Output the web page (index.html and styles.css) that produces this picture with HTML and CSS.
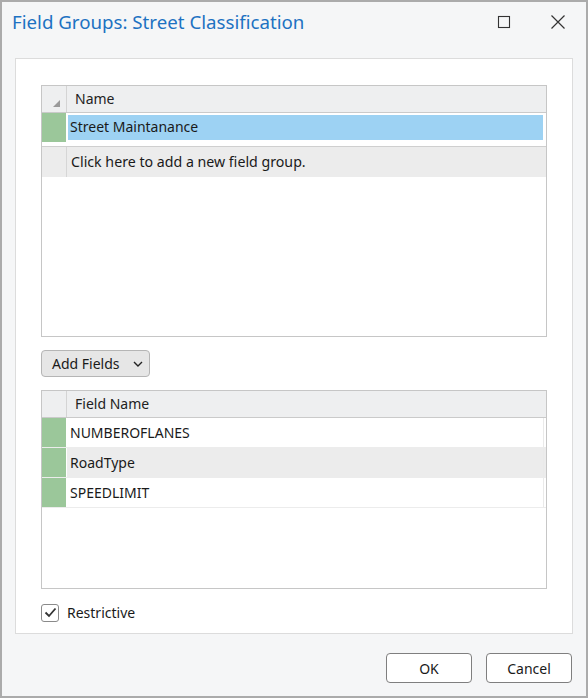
FILE: index.html
```html
<!DOCTYPE html>
<html lang="en">
<head>
  <meta charset="UTF-8">
  <title>Field Groups: Street Classification</title>
  <link rel="stylesheet" href="styles.css">
</head>
<body>
  <div class="window">
    <div class="titlebar">
      <div class="title">Field Groups: Street Classification</div>
      <div class="win-buttons">
        <svg class="win-icon" width="14" height="14" viewBox="0 0 14 14">
          <rect x="1.5" y="1.5" width="11" height="11" fill="none" stroke="#333" stroke-width="1.1"/>
        </svg>
        <svg class="win-icon close" width="16" height="16" viewBox="0 0 16 16">
          <path d="M1.5 1.5 L14.5 14.5 M14.5 1.5 L1.5 14.5" stroke="#333" stroke-width="1.2" fill="none"/>
        </svg>
      </div>
    </div>

    <div class="panel">
      <div class="grid groups">
        <div class="grid-header">
          <div class="corner">
            <svg width="7" height="7" viewBox="0 0 7 7"><path d="M7 0 L7 7 L0 7 Z" fill="#9a9a9a"/></svg>
          </div>
          <div class="head-cell">Name</div>
        </div>
        <div class="row selected">
          <div class="row-head green"></div>
          <div class="cell"><span class="sel">Street Maintanance</span></div>
        </div>
        <div class="row new-row">
          <div class="row-head"></div>
          <div class="cell">Click here to add a new field group.</div>
        </div>
      </div>

      <button class="dropdown">Add Fields
        <svg width="10" height="6" viewBox="0 0 10 6"><path d="M1 1 L5 5 L9 1" stroke="#222" stroke-width="1.4" fill="none"/></svg>
      </button>

      <div class="grid fields">
        <div class="grid-header">
          <div class="corner"></div>
          <div class="head-cell">Field Name</div>
        </div>
        <div class="row">
          <div class="row-head green"></div>
          <div class="cell">NUMBEROFLANES</div>
        </div>
        <div class="row alt">
          <div class="row-head green"></div>
          <div class="cell">RoadType</div>
        </div>
        <div class="row">
          <div class="row-head green"></div>
          <div class="cell">SPEEDLIMIT</div>
        </div>
      </div>

      <label class="check">
        <span class="box">
          <svg width="13" height="11" viewBox="0 0 13 11"><path d="M1.5 5.5 L5 9 L11.5 1.5" stroke="#333" stroke-width="1.8" fill="none"/></svg>
        </span>
        Restrictive
      </label>
    </div>

    <div class="footer">
      <button class="btn">OK</button>
      <button class="btn">Cancel</button>
    </div>
  </div>
</body>
</html>
```

FILE: styles.css
```css
* {
    margin: 0;
    padding: 0;
    box-sizing: border-box;
}

body {
    font-family: "Noto Sans", "Open Sans", sans-serif;
    font-size: 14px;
    color: #1a1a1a;
    background: #f5f6f7;
}

.window {
    width: 588px;
    height: 698px;
    border: 2px solid #ababab;
    background: #f5f6f7;
    display: flex;
    flex-direction: column;
}

.titlebar {
    height: 56px;
    display: flex;
    justify-content: space-between;
    padding: 7px 0 0 10px;
}

.title {
    color: #1d72c2;
    font-size: 18.7px;
    line-height: 26px;
}

.win-buttons {
    display: flex;
    gap: 39px;
    padding: 6px 20px 0 0;
}

.win-icon {
    display: block;
}

.close {
    margin-top: -1px;
}

.panel {
    margin: 0 13px;
    height: 576px;
    background: #fff;
    border: 1px solid #dcdcdc;
    padding: 26px 25px 0 25px;
}

.grid {
    width: 506px;
    border: 1px solid #c6c6c6;
    background: #fff;
}

.groups {
    height: 252px;
}

.fields {
    height: 199px;
}

.grid-header {
    display: flex;
    height: 27px;
    background: #eeeff0;
    border-bottom: 1px solid #cacaca;
}

.corner {
    width: 25px;
    border-right: 1px solid #d4d4d4;
    display: flex;
    justify-content: flex-end;
    align-items: flex-end;
    padding: 0 6px 5px 0;
}

.head-cell {
    padding-left: 8px;
    line-height: 26px;
    color: #222;
}

.row {
    display: flex;
    height: 30px;
    border-bottom: 1px solid #ececec;
    padding-right: 2px;
}

.row-head {
    width: 25px;
    border-right: 1px solid #e0e0e0;
    flex-shrink: 0;
}

.green {
    background: #9bc79a;
    border-right: 1px solid #fff;
}

.cell {
    flex: 1;
    line-height: 29px;
    padding-left: 3px;
    border-right: 1px solid #eaeaea;
}

.selected {
    height: 33px;
    border-bottom: 4px solid #fff;
}

.selected .cell {
    padding: 2px 1px 0 1px;
    border-right: none;
}

.sel {
    display: block;
    background: #9dd2f3;
    height: 25px;
    line-height: 24px;
    padding-left: 2px;
}

.new-row {
    height: 31px;
    background: #ececec;
    border-top: 1px solid #cfcfcf;
    border-bottom: none;
}

.new-row .row-head {
    border-right: 1px solid #d6d6d6;
}

.new-row .cell {
    padding-left: 4px;
    border-right: none;
    font-size: 14.2px;
}

.alt {
    background: #ececec;
}

.dropdown {
    margin: 13px 0 13px 0;
    height: 27px;
    width: 109px;
    display: flex;
    align-items: center;
    gap: 13px;
    padding-left: 10px;
    font-family: inherit;
    font-size: 14px;
    color: #1a1a1a;
    background: #e6e6e6;
    border: 1px solid #b5b5b5;
    border-radius: 4px;
}

.check {
    display: flex;
    align-items: center;
    gap: 8px;
    margin-top: 14px;
    font-size: 14px;
}

.box {
    width: 18px;
    height: 18px;
    border: 1px solid #8a8a8a;
    border-radius: 3px;
    display: flex;
    align-items: center;
    justify-content: center;
}

.footer {
    flex: 1;
    display: flex;
    justify-content: flex-end;
    gap: 14px;
    padding: 19px 14px 0 0;
}

.btn {
    width: 86px;
    height: 30px;
    background: #fff;
    border: 1px solid #7f7f7f;
    border-radius: 4px;
    font-family: inherit;
    font-size: 14px;
    color: #1a1a1a;
}
```
